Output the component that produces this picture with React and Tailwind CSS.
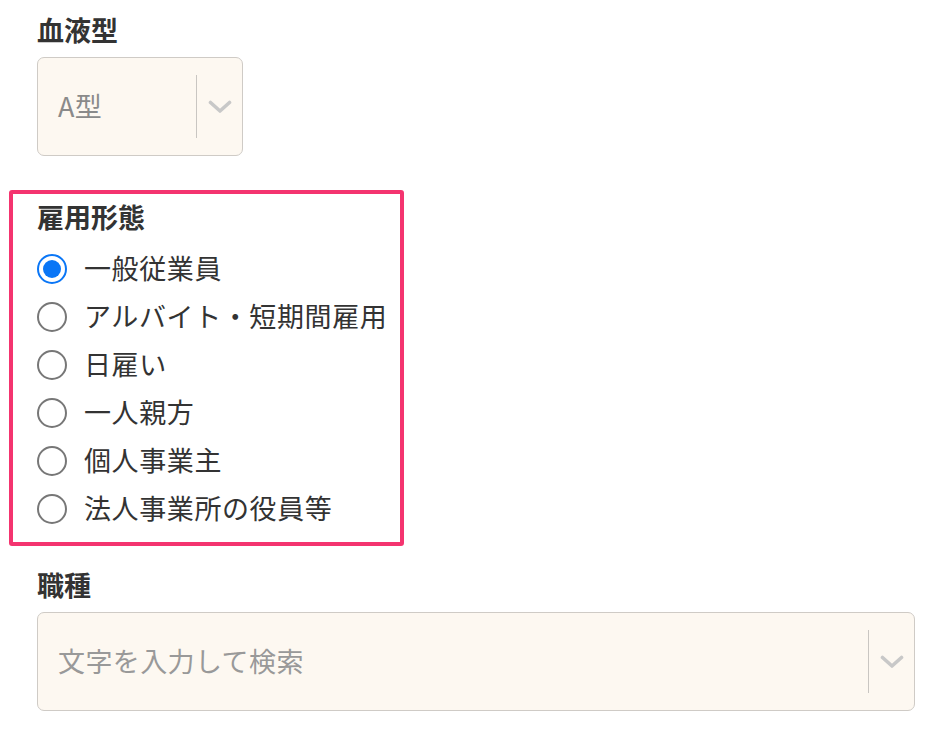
const FONT = '"Noto Sans CJK JP", "Noto Sans", sans-serif';

const employmentTypes = [
  "一般従業員",
  "アルバイト・短期間雇用",
  "日雇い",
  "一人親方",
  "個人事業主",
  "法人事業所の役員等",
];

function Chevron() {
  return (
    <svg width="24" height="14" viewBox="0 0 24 14" fill="none">
      <path
        d="M2.5 2.5 L12 11 L21.5 2.5"
        stroke="#c8c8c8"
        strokeWidth="3.6"
        strokeLinecap="round"
        strokeLinejoin="round"
      />
    </svg>
  );
}

function SelectBox({ value, placeholder, className }) {
  return (
    <div
      className={`flex items-center h-[99px] rounded-[7px] border-[1.5px] border-[#cfcbc6] bg-[#fdf8f1] ${className}`}
    >
      <div
        className={`flex-1 pl-[20px] pb-[2px] text-[27px] leading-none tracking-[0.4px] ${
          value ? "text-[#8a8a8a]" : "text-[#999]"
        }`}
      >
        {value || placeholder}
      </div>
      <div className="w-[1.5px] h-[63px] bg-[#c9c6c2]" />
      <div className="w-[45px] flex items-center justify-center">
        <Chevron />
      </div>
    </div>
  );
}

function Radio({ checked }) {
  if (checked) {
    return (
      <div className="w-[30px] h-[30px] rounded-full border-[2.5px] border-[#0a76f6] flex items-center justify-center">
        <div className="w-[18px] h-[18px] rounded-full bg-[#0a76f6]" />
      </div>
    );
  }
  return <div className="w-[30px] h-[30px] rounded-full border-2 border-[#777]" />;
}

export default function App() {
  const selected = 0;

  return (
    <div
      className="w-[940px] h-[738px] bg-white text-[#333] overflow-hidden"
      style={{ fontFamily: FONT }}
    >
      <div className="pl-[37px] pt-[14px]">
        <div className="h-[32px] leading-[32px] text-[27px] font-bold">血液型</div>
        <SelectBox value="A型" className="mt-[11px] w-[206px]" />
      </div>

      <div className="ml-[9px] mt-[34px] w-[395px] border-[4.5px] border-[#f4346f] rounded-[3px] pl-[24px] pt-[7px] pb-[9px]">
        <div className="h-[32px] leading-[32px] text-[27px] font-bold">雇用形態</div>
        <div className="mt-[12px] flex flex-col">
          {employmentTypes.map((label, i) => (
            <label key={label} className="h-[48px] flex items-center gap-[17px]">
              <Radio checked={i === selected} />
              <span className="text-[27px] leading-none tracking-[0.6px] pb-[4px]">{label}</span>
            </label>
          ))}
        </div>
      </div>

      <div className="pl-[37px] pr-[25px] mt-[23px]">
        <div className="h-[32px] leading-[32px] text-[27px] font-bold">職種</div>
        <SelectBox placeholder="文字を入力して検索" className="mt-[11px] w-full" />
      </div>
    </div>
  );
}
